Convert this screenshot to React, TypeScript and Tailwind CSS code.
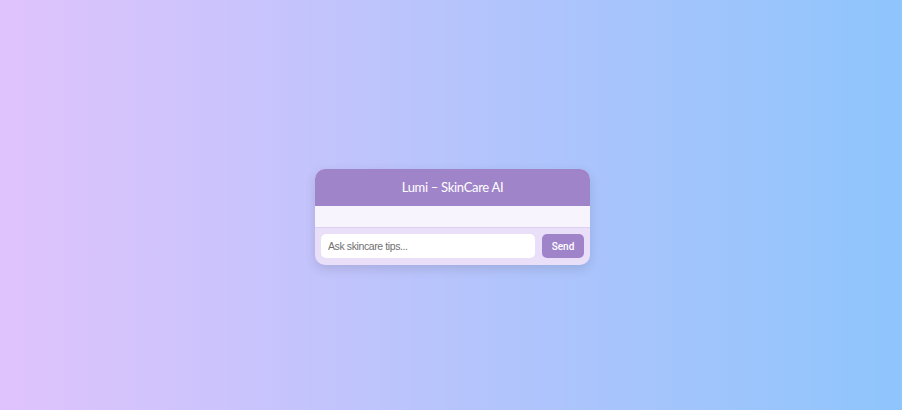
export default function App() {
  return (
    <div className="h-[410px] w-full flex items-center justify-center pt-6 pl-[3px] bg-[linear-gradient(to_right,#e0c3fc,#8ec5fc)]">
      <div className="w-[275px] rounded-[10px] overflow-hidden bg-[#eadff8] shadow-[0_4px_12px_rgba(0,0,0,0.12)]">
        <div className="h-[37px] bg-[#a084ca] flex items-center justify-center text-white text-[13px] tracking-[-0.3px] font-['Lato','Noto_Sans',sans-serif]">
          Lumi – SkinCare AI
        </div>
        <div className="h-[21px] bg-[#f8f4fe]" />
        <div className="border-t border-[#ddd0f0] flex items-center gap-[7px] px-[6px] pt-[6px] pb-[7px]">
          <input
            className="flex-1 min-w-0 h-[24px] rounded-[5px] bg-white px-[7px] text-[10.5px] tracking-[-0.4px] font-['Liberation_Sans',Arial,sans-serif] outline-none placeholder:text-[#707070]"
            placeholder="Ask skincare tips..."
          />
          <button className="h-[24px] w-[42px] rounded-[5px] bg-[#a084ca] text-white text-[10px] font-medium font-['Roboto',sans-serif]">
            Send
          </button>
        </div>
      </div>
    </div>
  );
}
